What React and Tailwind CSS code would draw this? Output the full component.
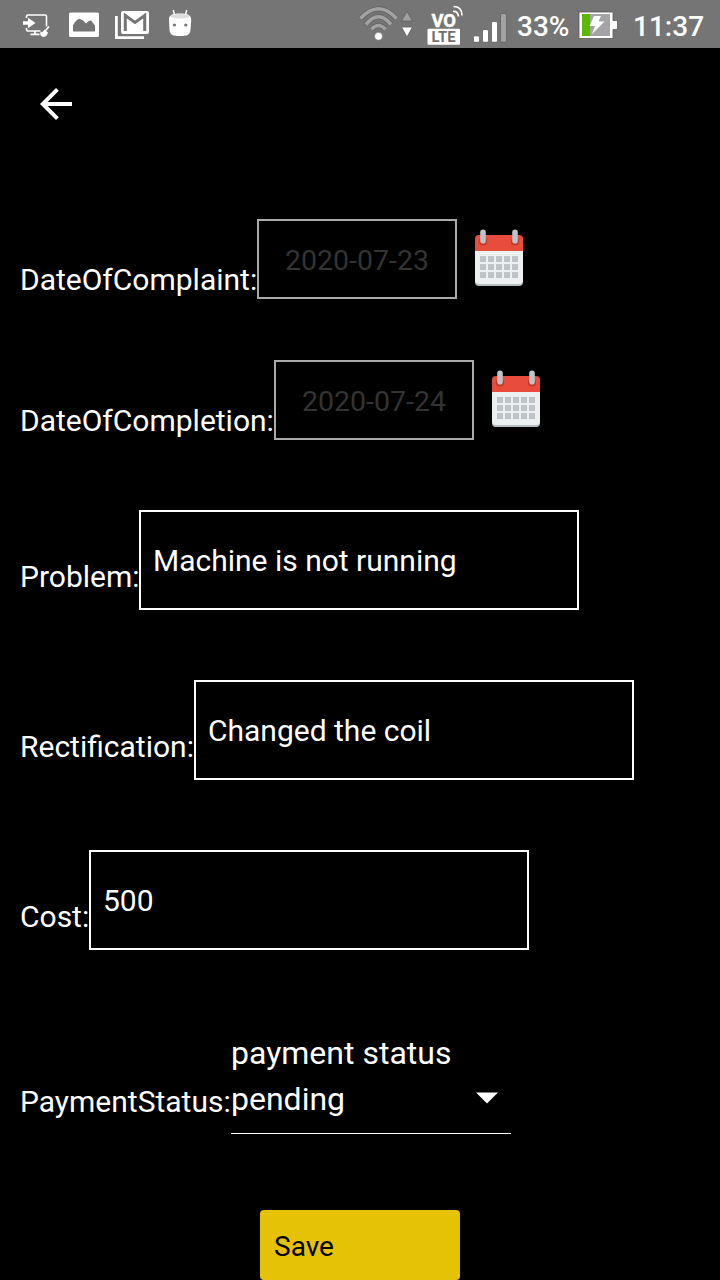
function StatusIcons() {
  return (
    <svg className="block h-12 w-[200px]" viewBox="0 0 200 48" fill="none">
      <g stroke="#fff" strokeWidth="1.6" strokeLinejoin="round">
        <path d="M26.500 18V16.500Q26.500 15 28 15H45Q46.500 15 46.500 16.500V26.500M26.500 28V29.500Q26.500 31 28 31H40.500" />
        <path d="M30.500 34.300H39.500M35 31V34" strokeWidth="1.800" />
        <path d="M45.500 30.500L49 26.500" />
      </g>
      <path d="M23 21.300H28V17.800L35.500 23L28 28.200V24.700H23Z" fill="#fff" />
      <path d="M40 32.500Q43 32.500 44.500 29.500L48 32.500Q47 36.500 43.500 37Q40 36.500 40 32.500Z" fill="#fff" />
      <path
        fill="#fff"
        fillRule="evenodd"
        d="M70.500 12.500H97.500Q99 12.500 99 14V35.500Q99 37 97.500 37H70.500Q69 37 69 35.500V14Q69 12.500 70.500 12.500ZM73 31.500V25.500Q76 19.500 79.500 18.800Q83 19.500 86 23.500Q89 19.800 91 20.500L95 25.500V31.500Z"
      />
      <path d="M116.400 16V37.700H144" stroke="#fff" strokeWidth="2.800" />
      <rect x="121" y="11" width="28" height="23" rx="2" fill="#fff" />
      <path d="M125.300 31V15.500L135 22.500L144.700 15.500V31" stroke="#757575" strokeWidth="3" />
      <path d="M174.700 16L173.300 10M185.300 16L186.700 10" stroke="#fff" strokeWidth="1.500" />
      <path
        d="M169 20C168.500 15.500 172 13.500 180 13.500S191.500 15.500 191.200 20L190.500 30C190 35 187 36 180 36S170 35 169.500 30Z"
        fill="#fff"
      />
      <ellipse cx="180" cy="16.200" rx="9.500" ry="2.200" fill="#dcdcdc" />
      <circle cx="174.400" cy="25" r="1.600" fill="#757575" />
      <circle cx="185.800" cy="25" r="1.600" fill="#757575" />
    </svg>
  );
}

const WIFI_ARCS = [
  "M360.500 18.500Q378.500 -1 396.500 18.500",
  "M366 24.500Q378.500 9 391 24.500",
  "M371.500 29.500Q378.500 21.500 385.500 29.500",
];

function SignalIcons() {
  return (
    <svg className="block h-12 w-[152px]" viewBox="358 0 152 48" fill="none">
      {WIFI_ARCS.map((d) => (
        <g key={d}>
          <path d={d} stroke="#606060" strokeWidth="5" />
          <path d={d} stroke="#a2a2a2" strokeWidth="3.600" />
        </g>
      ))}
      <circle cx="378.500" cy="36.300" r="4" fill="#fff" stroke="#686868" strokeWidth=".6" />
      <path d="M401.500 21L407 11.500L412.500 21Z" fill="#a0a0a0" stroke="#606060" strokeWidth=".8" />
      <path d="M401.500 27H412.500L407 37Z" fill="#fff" stroke="#606060" strokeWidth=".8" />
      <text x="431.500" y="26.800" fill="#fff" stroke="#fff" strokeWidth=".5" fontFamily="Roboto, sans-serif" fontSize="18.500" fontWeight="700" textLength="24.500" lengthAdjust="spacingAndGlyphs">VO</text>
      <path d="M453 11.500Q458 11 458.500 16.500M453.500 6.500Q462 6.500 462 15.500" stroke="#fff" strokeWidth="1.700" />
      <rect x="427.500" y="28.700" width="32.500" height="16" rx="1" fill="#fff" />
      <text x="431.500" y="42" fill="#707070" fontFamily="Roboto, sans-serif" fontSize="14.500" fontWeight="700" textLength="24" lengthAdjust="spacingAndGlyphs">LTE</text>
      <g stroke="#606060" strokeWidth=".8">
        <rect x="473.500" y="35.800" width="6" height="6.500" rx="1.500" fill="#fff" />
        <rect x="482.500" y="29.500" width="6" height="12.800" rx="1.500" fill="#fff" />
        <rect x="491.500" y="21.500" width="6" height="20.800" rx="1.500" fill="#fff" />
        <rect x="500.500" y="13.500" width="6" height="28.800" rx="1.500" fill="#a2a2a2" />
      </g>
    </svg>
  );
}

function BatteryIcon() {
  return (
    <svg className="block h-12 w-10" viewBox="578 0 40 48">
      <path d="M579 12H613V20.500H617.500V29.500H613V38.500H579Z" fill="#fff" stroke="#5a5a5a" strokeWidth=".8" />
      <rect x="582" y="14" width="28" height="22" fill="#a4a4a4" />
      <rect x="582" y="14" width="8" height="22" fill="#5cb800" />
      <path d="M594 16H601L598.500 21.500H604.500L592 34L595 26H589.500Z" fill="#fff" />
    </svg>
  );
}

function CalendarIcon() {
  return (
    <svg className="mt-[9px] ml-[17px] block h-[60px] w-[50px] shrink-0" viewBox="0 0 50 60">
      <rect x="1" y="17" width="48" height="41" rx="4" fill="#b5bfc0" />
      <path d="M1 21H49V52Q49 56 45 56H5Q1 56 1 52Z" fill="#ecf0f1" />
      <path d="M5 7H45Q49 7 49 11V23H1V11Q1 7 5 7Z" fill="#e74c3c" />
      {[9, 41].map((x) => (
        <g key={x}>
          <circle cx={x} cy="13.500" r="4" fill="#c0392b" />
          <rect x={x - 2.8} y="1.500" width="5.600" height="14" rx="2.800" fill="#bdc3c7" />
        </g>
      ))}
      {[28, 36, 44].map((y) =>
        [6, 14, 22, 30, 38].map((x) => (
          <rect key={`${x}-${y}`} x={x} y={y} width="6" height="6" fill="#bdc3c7" />
        ))
      )}
    </svg>
  );
}

function DateRow({ label, value, labelClass, className }) {
  return (
    <div className={`flex h-20 items-start ${className}`}>
      <span className={`mt-[41px] shrink-0 text-[30px] leading-10 whitespace-nowrap ${labelClass}`}>{label}</span>
      <div className="flex h-20 w-[200px] shrink-0 items-center justify-center border-2 border-[#aaaaaa] pt-[5px] text-[28.500px] text-[#333333]">
        {value}
      </div>
      <CalendarIcon />
    </div>
  );
}

function TextRow({ label, value, labelClass, className }) {
  return (
    <div className={`flex h-[100px] items-start ${className}`}>
      <span className={`mt-[47px] shrink-0 text-[30px] leading-10 whitespace-nowrap ${labelClass}`}>{label}</span>
      <div className="flex h-[100px] w-[440px] shrink-0 items-center border-2 border-white pl-3 text-[30px]">{value}</div>
    </div>
  );
}

export default function App() {
  return (
    <div className="flex h-[1280px] w-[720px] flex-col overflow-hidden bg-black font-[Roboto,sans-serif] text-white">
      <header className="flex h-12 shrink-0 items-center bg-[#757575]">
        <StatusIcons />
        <div className="ml-[158px]">
          <SignalIcons />
        </div>
        <span className="ml-[7px] w-[61px] pt-1.5 text-[28px] font-medium whitespace-nowrap">33%</span>
        <BatteryIcon />
        <span className="ml-[15px] pt-1.5 text-[28px] font-medium">11:37</span>
      </header>
      <button className="mt-8 ml-8 h-12 w-12 shrink-0" aria-label="Back">
        <svg className="block h-12 w-12" viewBox="0 0 24 24" fill="#fff">
          <path d="M20 11H7.830l5.590-5.590L12 4l-8 8 8 8 1.410-1.410L7.830 13H20v-2z" />
        </svg>
      </button>
      <main className="flex flex-col pt-[91px] pl-5">
        <DateRow label="DateOfComplaint:" value="2020-07-23" labelClass="w-[237px]" className="" />
        <DateRow label="DateOfCompletion:" value="2020-07-24" labelClass="w-[254px]" className="mt-[61px]" />
        <TextRow label="Problem:" value="Machine is not running" labelClass="w-[119px]" className="mt-[70px]" />
        <TextRow label="Rectification:" value="Changed the coil" labelClass="w-[174px]" className="mt-[70px]" />
        <TextRow label="Cost:" value="500" labelClass="w-[69px]" className="mt-[70px]" />
        <div className="mt-20 flex h-[104px] items-start">
          <span className="mt-[52px] w-[211px] shrink-0 text-[30px] leading-10 whitespace-nowrap">PaymentStatus:</span>
          <div className="flex h-[104px] w-[280px] flex-col border-b border-white text-[32px]">
            <span className="mt-[3px] leading-10">payment status</span>
            <div className="mt-1.5 flex items-center justify-between pr-3">
              <span className="leading-10">pending</span>
              <svg className="-mt-[3px] block h-3 w-6" viewBox="0 0 24 12">
                <path d="M1 0.500H23L12 11.500Z" fill="#fff" />
              </svg>
            </div>
          </div>
        </div>
        <button className="mt-[76px] ml-60 flex h-[70px] w-[200px] items-center rounded-[4px] bg-[#e6c207] pt-[3px] pl-3.5 text-[28px] text-black">
          Save
        </button>
      </main>
    </div>
  );
}
